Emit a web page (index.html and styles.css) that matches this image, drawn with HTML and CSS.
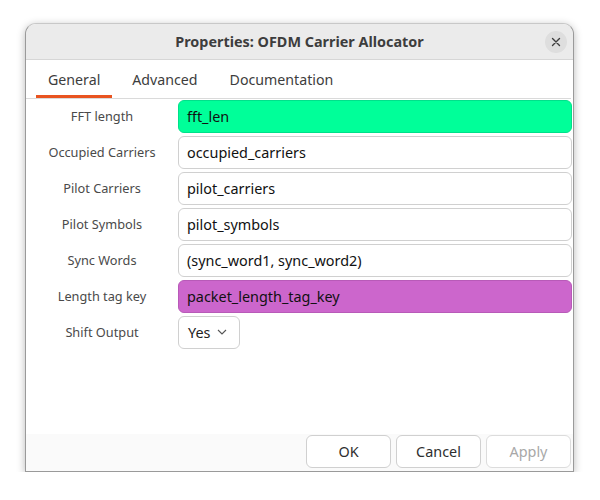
FILE: index.html
```html
<!DOCTYPE html>
<html>
<head>
<meta charset="utf-8">
<link rel="stylesheet" href="styles.css">
</head>
<body>
<div class="window">
  <div class="titlebar">
    <div></div>
    <div class="title">Properties: OFDM Carrier Allocator</div>
    <div class="close">
      <svg width="10" height="10" viewBox="0 0 10 10"><path d="M1.5 1.5 L8.5 8.5 M8.5 1.5 L1.5 8.5" stroke="#3d3d3d" stroke-width="1.4" stroke-linecap="round"/></svg>
    </div>
  </div>
  <div class="tabs">
    <div class="tab active">General</div>
    <div class="tab">Advanced</div>
    <div class="tab">Documentation</div>
  </div>
  <div class="form">
    <div class="label">FFT length</div>
    <div class="field int">fft_len</div>
    <div class="label">Occupied Carriers</div>
    <div class="field">occupied_carriers</div>
    <div class="label">Pilot Carriers</div>
    <div class="field">pilot_carriers</div>
    <div class="label">Pilot Symbols</div>
    <div class="field">pilot_symbols</div>
    <div class="label">Sync Words</div>
    <div class="field">(sync_word1, sync_word2)</div>
    <div class="label">Length tag key</div>
    <div class="field string">packet_length_tag_key</div>
    <div class="label">Shift Output</div>
    <div class="combo-wrap"><div class="combo">Yes<svg width="10" height="6" viewBox="0 0 10 6"><path d="M1 1 L5 5 L9 1" fill="none" stroke="#555" stroke-width="1.1"/></svg></div></div>
  </div>
  <div class="footer">
    <div class="btn">OK</div>
    <div class="btn">Cancel</div>
    <div class="btn disabled">Apply</div>
  </div>
</div>
</body>
</html>
```
FILE: styles.css
```css
html, body {
  margin: 0;
  padding: 0;
  background: #ffffff;
}
body {
  font-family: "Noto Sans", "DejaVu Sans", sans-serif;
  color: #3d3d3d;
}
.window {
  margin: 23px 0 0 25px;
  width: 547px;
  height: 447px;
  border: 1px solid #9a9a9a;
  border-top-color: #c8c8c8;
  border-radius: 11px 11px 0 0;
  box-shadow: 0 2px 9px rgba(0,0,0,0.28);
  background: #ffffff;
  display: flex;
  flex-direction: column;
  overflow: hidden;
}
.titlebar {
  height: 35px;
  flex: none;
  background: #ebebeb;
  border-bottom: 1px solid #d6d6d6;
  display: grid;
  grid-template-columns: 1fr auto 1fr;
  align-items: center;
}
.title {
  font-weight: bold;
  font-size: 14.4px;
  color: #3d3d3d;
}
.close {
  justify-self: end;
  margin-right: 6px;
  width: 22px;
  height: 22px;
  border-radius: 50%;
  background: #dedede;
  display: flex;
  align-items: center;
  justify-content: center;
}
.tabs {
  flex: none;
  display: flex;
  gap: 8px;
  padding-left: 10px;
  margin-right: 2px;
  border-bottom: 1px solid #dadada;
  box-sizing: border-box;
  height: 39px;
}
.tab {
  padding: 3px 12px 0;
  font-size: 14.2px;
  display: flex;
  align-items: center;
  border-bottom: 3px solid transparent;
}
.tab.active {
  border-bottom-color: #e95420;
}
.form {
  flex: 1;
  display: grid;
  grid-template-columns: 152px 1fr;
  grid-auto-rows: 33px;
  row-gap: 3px;
  padding: 1px 1px 0 0;
  align-content: start;
}
.label {
  font-size: 12.75px;
  color: #4a4a4a;
  text-align: center;
  align-self: center;
  padding-bottom: 1px;
}
.field {
  border: 1px solid #d0d0d0;
  border-radius: 6px;
  background: #ffffff;
  font-size: 14.4px;
  color: #111111;
  padding: 0 8px;
  display: flex;
  align-items: center;
  padding-bottom: 1px;
}
.field.int {
  background: #00ff99;
  border-color: #00e08a;
}
.field.string {
  background: #cc66cc;
  border-color: #b85ab8;
}
.combo-wrap {
  display: flex;
}
.combo {
  border: 1px solid #d0d0d0;
  border-radius: 6px;
  background: #ffffff;
  font-size: 14.4px;
  color: #222222;
  width: 62px;
  box-sizing: border-box;
  padding: 0 0 1px 9px;
  display: flex;
  align-items: center;
  gap: 7px;
}
.footer {
  height: 37px;
  flex: none;
  background: #fafafa;
  display: flex;
  justify-content: flex-end;
  gap: 5px;
  padding: 1px 2px 0 0;
  box-sizing: border-box;
}
.btn {
  width: 85px;
  height: 33px;
  box-sizing: border-box;
  border: 1px solid #d0d0d0;
  border-radius: 6px;
  background: #ffffff;
  font-size: 14.4px;
  color: #2e2e2e;
  display: flex;
  align-items: center;
  justify-content: center;
  padding-bottom: 1px;
}
.btn.disabled {
  color: #a8a8a8;
  border-color: #dcdcdc;
}
```
